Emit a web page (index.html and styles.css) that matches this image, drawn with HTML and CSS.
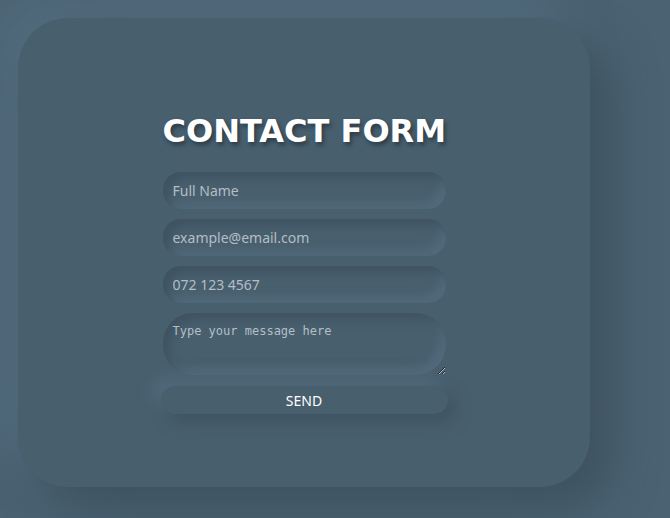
FILE: index.html
```html
<!DOCTYPE html>
<html>
<head>
<meta charset="utf-8">
<link rel="stylesheet" href="styles.css">
</head>
<body>
<div class="card">
  <form class="form">
    <h1 class="title">CONTACT FORM</h1>
    <input class="field" type="text" placeholder="Full Name">
    <input class="field" type="email" placeholder="example@email.com">
    <input class="field" type="tel" placeholder="072 123 4567">
    <textarea class="field message" placeholder="Type your message here"></textarea>
    <button class="send" type="button">SEND</button>
  </form>
</div>
</body>
</html>
```
FILE: styles.css
```css
html, body {
  margin: 0;
  height: 100%;
}
body {
  background: #4a6272;
  padding: 18px;
  box-sizing: border-box;
  overflow: hidden;
  font-family: "Noto Sans", "Open Sans", sans-serif;
}
.card {
  width: 572px;
  height: 469px;
  border-radius: 50px;
  background: #485f6e;
  box-shadow: 22px 22px 44px #3e5261, -22px -22px 44px #536c7e;
  display: flex;
  justify-content: center;
  padding-top: 93px;
  box-sizing: border-box;
}
.form {
  width: 283px;
  display: flex;
  flex-direction: column;
}
.title {
  margin: 0 0 21px;
  font-family: "DejaVu Sans", sans-serif;
  font-weight: bold;
  font-size: 32px;
  line-height: 40px;
  color: #ffffff;
  text-align: center;
  white-space: nowrap;
  text-shadow: 2px 3px 4px #2c3a45;
}
.field {
  display: block;
  height: 37px;
  margin: 0 0 10px;
  padding: 0 10px;
  border: none;
  outline: none;
  border-radius: 18px;
  background: #485f6e;
  box-shadow: inset 6px 6px 10px #3f5362, inset -6px -6px 10px #526b7c;
  font-family: "Noto Sans", "Open Sans", sans-serif;
  font-size: 14px;
  color: #dfe6eb;
  box-sizing: border-box;
}
.field::placeholder {
  color: #b3bec6;
}
.message {
  height: 62px;
  margin-bottom: 11px;
  padding: 11px 10px 9px;
  border-radius: 30px;
  font-family: "DejaVu Sans Mono", monospace;
  font-size: 12px;
  resize: vertical;
}
.send {
  width: 287px;
  margin-left: -2px;
  height: 28px;
  border: none;
  border-radius: 14px;
  background: #485f6e;
  box-shadow: 8px 8px 16px #3f5363, -8px -8px 16px #526b7c;
  color: #ffffff;
  font-family: "Noto Sans", "Open Sans", sans-serif;
  font-size: 14px;
  cursor: pointer;
}
```
